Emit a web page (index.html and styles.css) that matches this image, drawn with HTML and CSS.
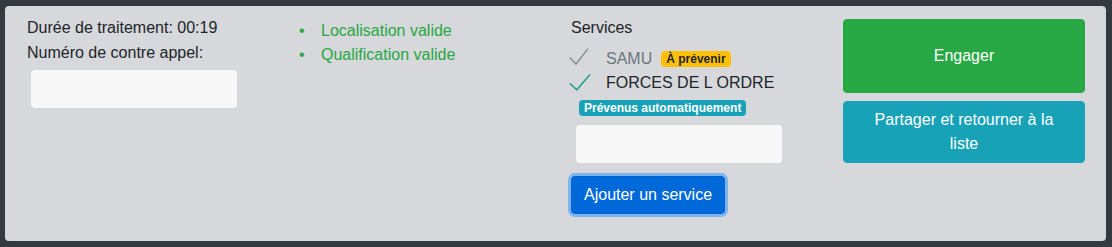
FILE: index.html
```html
<!DOCTYPE html>
<html lang="fr">
<head>
<meta charset="utf-8">
<title>Traitement</title>
<link rel="stylesheet" href="styles.css">
</head>
<body>
<div class="panel">
  <div class="col col-info">
    <div class="line">Durée de traitement: 00:19</div>
    <label class="line label">Numéro de contre appel:</label>
    <input class="field field-call" type="text">
  </div>
  <div class="col col-valid">
    <ul class="checks">
      <li>Localisation valide</li>
      <li>Qualification valide</li>
    </ul>
  </div>
  <div class="col col-services">
    <div class="line">Services</div>
    <div class="services">
      <div class="service service-pending">
        <svg class="tick" width="22" height="17" viewBox="0 0 22 17"><path d="M0.6 9.4 L7 16 L19 0.6" fill="none" stroke="currentColor" stroke-width="1.5"/></svg>
        <span class="service-name">SAMU</span>
        <span class="badge badge-warning">À prévenir</span>
      </div>
      <div class="service service-done">
        <svg class="tick" width="22" height="17" viewBox="0 0 22 17"><path d="M0.8 9.3 L7.8 15.8 L21 0.6" fill="none" stroke="currentColor" stroke-width="1.5"/></svg>
        <span class="service-name">FORCES DE L ORDRE</span>
      </div>
    </div>
    <span class="badge badge-info badge-auto">Prévenus automatiquement</span>
    <input class="field field-service" type="text">
    <button class="btn btn-primary btn-add" type="button">Ajouter un service</button>
  </div>
  <div class="col col-actions">
    <button class="btn btn-success btn-engage" type="button">Engager</button>
    <button class="btn btn-info btn-share" type="button">Partager et retourner à la liste</button>
  </div>
</div>
</body>
</html>
```
FILE: styles.css
```css
* { box-sizing: border-box; }
html, body { margin: 0; padding: 0; }
body {
  background: #343a40;
  font-family: "Liberation Sans", Arial, sans-serif;
  font-size: 16px;
  line-height: 24px;
  color: #212529;
  width: 1112px;
  height: 247px;
  overflow: hidden;
}
.panel {
  margin: 6px 0 0 5px;
  width: 1101px;
  height: 235px;
  background: #d6d8db;
  border-radius: 4px;
  padding: 10px 20px 0 22px;
  display: grid;
  grid-template-columns: 254px 290px 272px 242px;
  align-items: start;
}
.col { display: flex; flex-direction: column; align-items: flex-start; }
.line { display: block; height: 24px; }
.label { margin-top: 1px; }
.field {
  border: none;
  background: #f7f7f7;
  border-radius: 4px;
  width: 206px;
  height: 38px;
  padding: 0 12px;
  font: inherit;
  outline: none;
}
.field-call { margin: 5px 0 0 4px; }
.checks {
  margin: 3px 0 0;
  padding-left: 40px;
  color: #28a745;
  list-style: none;
}
.checks li::before {
  content: "\2022";
  display: inline-block;
  width: 22px;
  margin-left: -22px;
  color: #28a745;
}
.services { margin-top: 7px; display: flex; flex-direction: column; }
.service { display: flex; align-items: flex-start; height: 24px; }
.tick { margin: 1px 15px 0 -2px; flex: none; }
.service-pending { color: #8c8c8c; }
.service-pending .service-name { color: #6c757d; }
.service-done .tick { margin-top: 3px; color: #1fa28c; }
.service-done .service-name { color: #212529; }
.badge {
  display: inline-block;
  font-size: 12px;
  font-weight: bold;
  line-height: 12px;
  padding: 2px 5px;
  border-radius: 4px;
  white-space: nowrap;
}
.badge-warning { background: #ffc107; color: #212529; margin: 4px 0 0 9px; }
.badge-info { background: #17a2b8; color: #fff; }
.badge-auto { margin: 5px 0 0 8px; }
.field-service { margin: 9px 0 0 5px; }
.btn {
  font: inherit;
  line-height: 24px;
  color: #fff;
  border: 1px solid transparent;
  border-radius: 4px;
  cursor: pointer;
  text-align: center;
}
.btn-primary {
  background: #0069d9;
  border-color: #0062cc;
  box-shadow: 0 0 0 3px rgba(38, 143, 255, 0.5);
}
.btn-add { margin-top: 13px; height: 38px; padding: 0 12px; }
.btn-success { background: #28a745; border-color: #28a745; }
.btn-info { background: #17a2b8; border-color: #17a2b8; }
.btn-engage { margin-top: 3px; width: 242px; height: 74px; }
.btn-share { margin-top: 8px; width: 242px; height: 62px; padding: 6px 24px; }
```
